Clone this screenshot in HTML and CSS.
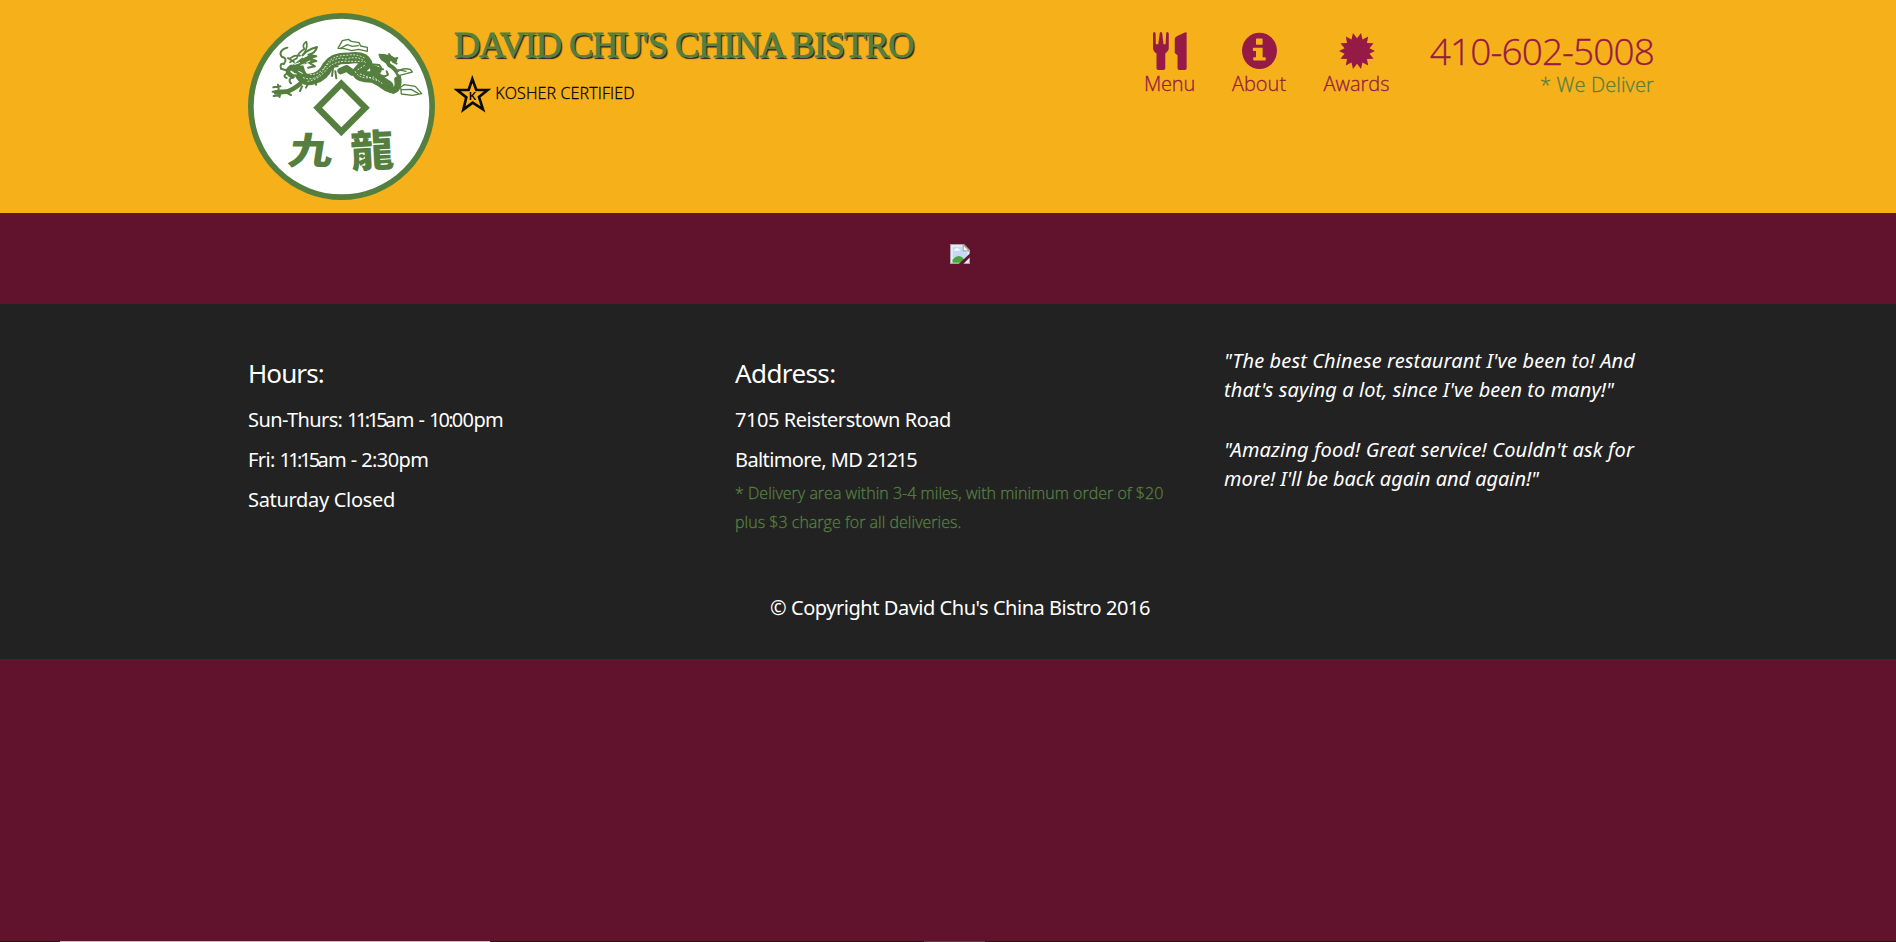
FILE: index.html
```html
<!DOCTYPE html>
<html lang="en">
<head>
<meta charset="utf-8">
<title>David Chu's China Bistro</title>
<link rel="stylesheet" href="styles.css">
</head>
<body>
<header class="header">
  <svg class="logo" viewBox="24 24 561 561" role="img">
    <circle cx="304.500" cy="304.500" r="272" fill="#fff" stroke="#557f3f" stroke-width="17"/>
    <path d="M304 236 L376 308 L304 380 L233 308 Z" fill="none" stroke="#557f3f" stroke-width="19"/>
    <g fill="none" stroke="#557f3f" stroke-linecap="round" stroke-linejoin="round">
      <path stroke-width="34" d="M176 192 Q185 234 223 220 Q250 212 263 184 Q282 158 323 160 Q371 152 380 175 Q366 187 353 203 Q360 217 398 216 Q423 228 444 244"/>
      <path stroke-width="19" d="M400 200 Q421 224 452 255 Q478 260 472 224"/>
      <path stroke-width="12" d="M460 260 Q487 244 475 209 Q465 190 448 181 Q437 169 454 159"/>
      <path stroke-width="14" d="M424 154 L447 157 L465 166 M427 159 L442 170 M180 237 Q158 255 139 260 L108 262 M154 186 Q132 201 158 214"/>
      <path stroke-width="6" d="M100 247 L121 244 M98 260 L125 257 M101 273 L121 270 M114 239 L119 276 M139 263 L153 270 M418 149 L435 151 M447 147 L452 154 M459 163 L472 159 M458 170 L470 176"/>
      <path stroke-width="6" d="M145 197 L123 191 Q118 173 132 177 Q144 159 125 155 Q113 137 142 128 M187 151 Q202 134 231 126 Q227 144 205 149 L229 154 L207 160 L229 168 L207 173 L225 184 L204 188 M144 159 L162 171 M140 206 Q126 214 140 219 M158 217 Q142 223 153 235 M186 244 L180 258 M203 238 L198 248 M228 230 L228 239 M269 186 L293 184 M279 190 L276 213 M286 199 L289 220 M393 178 L418 180 L424 190 M399 188 L429 193 M414 205 Q430 220 444 209 L440 199"/>
      <path stroke-width="5" d="M170 161 Q174 143 193 132 Q185 119 199 110 Q203 121 197 136 L190 149 M150 160 Q165 148 180 152 M150 172 L170 160"/>
      <path stroke-width="20" d="M302 198 L320 190 L336 202 M400 190 L415 196 M161 190 L190 168 L208 162"/>
      <path stroke-width="4" fill="#fff" d="M294 130 L307 107 L325 103 L334 109 L357 113 L362 123 L382 127 L382 139 L356 133 L335 137 L313 131 Z M300 131 L322 119 L337 124 L355 122 M471 202 Q485 187 511 193 L517 201 L499 206 L479 211 M482 246 L493 239 L526 244 L545 266 L517 271 L484 267 Z M486 254 L513 253 L536 266 M474 194 L498 199"/>
      <path stroke="#fff" stroke-width="2.500" stroke-dasharray="3 7" d="M190 218 Q222 230 247 200 Q277 150 319 162 Q360 150 377 174 M204 229 Q240 222 262 190 Q286 166 326 169 L366 169 M211 208 Q239 211 261 177 Q276 151 320 151 Q352 145 377 161 M346 200 Q359 225 400 216 L430 238 M354 194 L374 181 M361 207 L410 226"/>
      <path stroke="#fff" stroke-width="3" d="M164 178 L179 173 M183 181 L193 177 M159 205 L169 207 M176 199 L187 205 M200 172 L210 168 M190 158 L200 153 M425 203 L431 199"/>
    </g>
    <text class="logo-char" x="0" y="0" transform="translate(140 478) skewX(-9) scale(1.120 .940)" font-size="119">九</text>
    <text class="logo-char" x="0" y="0" transform="translate(334 488) rotate(-3)" font-size="130">龍</text>
  </svg>

  <div class="brand">
    <h1 class="title">DAVID CHU'S CHINA BISTRO</h1>
    <div class="kosher">
      <svg class="kosher-star" viewBox="42 196 112 113">
        <path d="M97 208 L109 241 L143 241 L117 262 L129 299 L98 279 L70 300 L79 263 L51 241 L86 241 Z" fill="none" stroke="#0c0b02" stroke-width="8"/>
        <text class="kosher-k" x="87" y="272">K</text>
      </svg>
      <span class="kosher-text">KOSHER CERTIFIED</span>
    </div>
  </div>

  <nav class="nav">
    <a class="nav-item menu">
      <svg class="icon" viewBox="97 66 97 108" width="34" height="38"><path d="M97 72Q97 66 101 66Q104 66 104.500 71L105 101H112L116 71Q116 66 119.500 66Q123.500 66 123.500 71L127 101H133L134.500 71Q134.500 66 138 66Q142 66 142 72V114Q141 121 132 127V169Q132 174 127 174H112Q107 174 107 169V127Q99 122 97 114ZM193 68V169Q193 174 188 174H172Q167 174 167 169V132L159 126V85Q160 80 166 77L188 67Q193 65 193 68Z"/></svg>
      <span>Menu</span>
    </a>
    <a class="nav-item about">
      <svg class="icon" viewBox="348 66 100 108" width="35" height="38"><path fill-rule="evenodd" d="M398 67.500A50 52 0 1 0 398 171.500A50 52 0 1 0 398 67.500ZM390 84H405Q407 84 407 86V100Q407 102 405 102H390Q388 102 388 100V86Q388 84 390 84ZM381 111H407V138H413Q416 138 416 141V145Q416 147 413 147H383Q380 147 380 145V141Q380 138 383 138H388V120H381Q379 120 379 117V114Q379 111 381 111Z"/></svg>
      <span>About</span>
    </a>
    <a class="nav-item awards">
      <svg class="icon" viewBox="-51.500 -54 103 108" width="36" height="38"><path d="M0-36.500L11.500-51.200L15.800-33L32.100-41.300L28.500-22.800L47.400-22.300L35.600-8.200L51.500 0L35.600 8.200L47.400 22.300L28.500 22.800L32.100 41.300L15.800 33L11.500 51.200L0 36.500L-11.500 51.200L-15.800 33L-32.100 41.300L-28.500 22.800L-47.400 22.300L-35.600 8.200L-51.500 0L-35.600-8.200L-47.400-22.300L-28.500-22.800L-32.100-41.300L-15.800-33L-11.500-51.200Z"/></svg>
      <span>Awards</span>
    </a>
  </nav>

  <div class="contact">
    <span class="phone">410-602-5008</span>
    <span class="deliver">* We Deliver</span>
  </div>
</header>

<main class="hero">
  <svg class="missing" viewBox="0 0 16 16">
    <path d="M.5 .5H11L15.500 5V15.500H.5Z" fill="#c5d8f6" stroke="#a5a5a5"/>
    <path d="M1.500 1.500H10.500V5.500H14.500V14.500H1.500Z" fill="#c5d8f6" stroke="#f4f6fb"/>
    <path d="M10.500 .5V5.500H15.500Z" fill="#fff" stroke="#a5a5a5"/>
    <path d="M3 5.200Q3 4 4.400 4Q5.500 2.200 6.700 4Q8 4 8 5.200Z" fill="#fff"/>
    <path d="M2 15V12.500Q7 6.500 12 13V15Z" fill="#49a835"/>
    <path d="M7 16L16 7.500V10.500L10.500 16Z" fill="#61122d"/>
  </svg>
</main>

<footer class="footer">
  <div class="columns">
    <section>
      <h2 class="heading hours">Hours:</h2>
      <p class="line tight">Sun-Thurs: <span class="time">11:15</span>am - <span class="time-late">10:</span>00pm</p>
      <p class="line tight">Fri: <span class="time">11:15</span>am - 2:30pm</p>
      <p class="line closed">Saturday Closed</p>
    </section>
    <section>
      <h2 class="heading address">Address:</h2>
      <p class="line street">7105 Reisterstown Road</p>
      <p class="line tight">Baltimore, MD <span class="zip">21215</span></p>
      <p class="note">* Delivery area within 3-4 miles, with minimum order of $20<br>plus $3 charge for all deliveries.</p>
    </section>
    <section class="quotes">
      <p class="quote"><span class="wide">"The best Chinese restaurant I've been to! And</span><br><span class="medium">that's saying a lot, since I've been to many!"</span></p>
      <p class="quote"><span class="wide">"Amazing food! Great service! Couldn't ask for</span><br><span class="narrow">more! I'll be back again and again!"</span></p>
    </section>
  </div>
  <p class="copyright">© Copyright David Chu's China Bistro 2016</p>
</footer>
<div class="rest"></div>
<div class="strip"><i class="strip-light"></i><i class="strip-grey"></i></div>
</body>
</html>
```
FILE: styles.css
```css
* { box-sizing: border-box; }
body {
  margin: 0;
  background: #61122d;
  font-family: "Noto Sans", sans-serif;
  font-size: 20px;
  overflow: hidden;
}
h1, h2, p { margin: 0; font-weight: 400; white-space: nowrap; }

.header {
  display: flex;
  align-items: flex-start;
  height: 213px;
  padding: 13px 0 0 248px;
  background: #f6b11a;
}
.logo { flex: none; width: 187px; height: 187px; }
.logo-char {
  font-family: "Noto Sans CJK TC", sans-serif;
  font-weight: 900;
  fill: #557f3f;
}
.brand { width: 690px; padding-left: 19px; }
.title {
  margin-top: 8px;
  font-family: "Liberation Serif", serif;
  font-size: 36.500px;
  line-height: 48px;
  letter-spacing: -1.170px;
  color: #557f3f;
  -webkit-text-stroke: .9px #557f3f;
  text-shadow: 1.500px 1.500px 1px #222;
}
.kosher { display: flex; align-items: flex-start; gap: 4px; margin-top: 6px; }
.kosher-star { width: 37.300px; height: 37.700px; }
.kosher-k { font: bold 30px "Liberation Sans", sans-serif; }
.kosher-text { margin-top: 6px; font-size: 16px; line-height: 24px; letter-spacing: .140px; color: #000; }
.kosher-text, .nav-item, .contact, .note {
  font-family: "Open Sans", sans-serif;
  font-weight: 300;
  -webkit-text-stroke: .3px currentColor;
}

.nav { display: flex; padding-top: 19px; color: #951b46; }
.nav-item { display: flex; flex-direction: column; align-items: center; line-height: 28px; }
.icon { fill: #951b46; }
.menu { width: 51px; margin-left: 19px; letter-spacing: -.2px; }
.about { width: 54px; margin-left: 37px; }
.awards { width: 67px; margin-left: 37px; }
.contact { display: flex; flex-direction: column; width: 225px; align-items: flex-end; margin-left: 39px; }
.phone { margin-top: 18px; font-size: 37px; line-height: 40px; letter-spacing: -.9px; color: #951b46; }
.deliver { line-height: 28px; letter-spacing: .140px; color: #557f3f; }

.hero { height: 91px; padding: 31px 0 0 950px; }
.missing { display: block; width: 20px; height: 20px; }

.footer { height: 355px; padding: 41px 0 0 248px; background: #222; color: #fff; }
.columns { display: grid; grid-template-columns: 487px 489px 448px; height: 230px; }
.heading { margin-top: 8px; font-size: 26px; line-height: 40px; }
.hours { letter-spacing: -.9px; }
.address { letter-spacing: -.6px; }
.line { line-height: 40px; }
.heading + .line { margin-top: 7px; }
.tight { letter-spacing: -.6px; }
.time { letter-spacing: -2.600px; }
.time-late { letter-spacing: -1.800px; }
.zip { letter-spacing: -1.600px; }
.closed { letter-spacing: -.310px; }
.street { letter-spacing: -.460px; }
.note { margin-top: -1px; font-size: 16px; line-height: 29px; letter-spacing: .020px; color: #557f3f; }
.quotes { padding-top: 1px; }
.quote { margin-bottom: 31px; font-style: italic; line-height: 29px; }
.wide { letter-spacing: .120px; }
.medium { letter-spacing: .080px; }
.narrow { letter-spacing: -.060px; }
.copyright { width: 1424px; margin-top: 13px; line-height: 40px; letter-spacing: -.460px; text-align: center; }

.rest { height: 282px; }
.strip { display: flex; height: 1px; background: #2b1219; }
.strip-light { width: 430px; margin-left: 60px; background: #d5b6c0; }
.strip-grey { width: 61px; margin-left: 434px; background: #5e3844; }
```
